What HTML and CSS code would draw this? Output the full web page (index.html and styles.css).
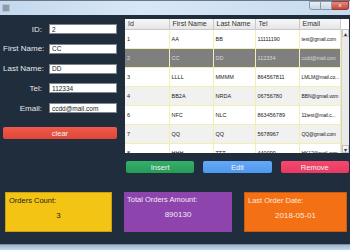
FILE: index.html
```html
<!DOCTYPE html>
<html lang="en">
<head>
  <meta charset="UTF-8">
  <title>Orders</title>
  <link rel="stylesheet" href="styles.css">
</head>
<body>
  <div class="window">
    <div class="titlebar">
      <span class="app-icon"></span>
      <div class="controls">
        <span class="ctl ctl-min"></span>
        <span class="ctl ctl-max"></span>
        <span class="ctl ctl-close">x</span>
      </div>
    </div>
    <div class="content">
      <div class="top">
        <div class="form">
          <label>ID:</label><input type="text" value="2">
          <label>First Name:</label><input type="text" value="CC">
          <label>Last Name:</label><input type="text" value="DD">
          <label>Tel:</label><input type="text" value="112334">
          <label>Email:</label><input type="text" value="ccdd@mail.com">
          <button class="btn clear">clear</button>
        </div>
        <div class="right">
          <div class="table-box">
            <table>
              <thead>
                <tr><th>Id</th><th>First Name</th><th>Last Name</th><th>Tel</th><th>Email</th></tr>
              </thead>
              <tbody>
                <tr><td>1</td><td>AA</td><td>BB</td><td>11111190</td><td>test@gmail.com</td></tr>
                <tr class="sel"><td>2</td><td>CC</td><td>DD</td><td>112334</td><td>ccdd@mail.com</td></tr>
                <tr><td>3</td><td>LLLL</td><td>MMMM</td><td>864567811</td><td>LMLM@mail.co...</td></tr>
                <tr class="alt"><td>4</td><td>BB2A</td><td>NRDA</td><td>06756780</td><td>BBN@gmail.vom</td></tr>
                <tr><td>6</td><td>NFC</td><td>NLC</td><td>863456789</td><td>11test@mail.c...</td></tr>
                <tr class="alt"><td>7</td><td>QQ</td><td>QQ</td><td>5678967</td><td>QQ@gmail.com</td></tr>
                <tr><td>8</td><td>HHH</td><td>TTT</td><td>440099</td><td>HK12@mail.com</td></tr>
              </tbody>
            </table>
            <div class="scrollbar">
              <span class="arrow">&#9652;</span>
              <span class="track"></span>
              <span class="arrow">&#9662;</span>
            </div>
          </div>
          <div class="actions">
            <button class="btn insert">Insert</button>
            <button class="btn edit">Edit</button>
            <button class="btn remove">Remove</button>
          </div>
        </div>
      </div>
      <div class="cards">
        <div class="card yellow">
          <div class="card-title">Orders Count:</div>
          <div class="card-value">3</div>
        </div>
        <div class="card purple">
          <div class="card-title">Total Orders Amount:</div>
          <div class="card-value">890130</div>
        </div>
        <div class="card orange">
          <div class="card-title">Last Order Date:</div>
          <div class="card-value">2018-05-01</div>
        </div>
      </div>
    </div>
    <div class="frame-bottom"></div>
  </div>
</body>
</html>
```

FILE: styles.css
```css
body {
  margin: 0;
  font-family: "Liberation Sans", Arial, sans-serif;
  background: #202d3c;
}

.window {
  width: 350px;
  height: 250px;
  display: flex;
  flex-direction: column;
  overflow: hidden;
}

.titlebar {
  height: 15px;
  flex: none;
  display: flex;
  justify-content: space-between;
  background: linear-gradient(90deg, #c3d8ee, #d8e7f7 40%, #c6dbf0);
  border-top: 1px solid #6d7683;
  box-sizing: border-box;
}

.app-icon {
  width: 6px;
  height: 6px;
  margin: 3px 0 0 2px;
  background: #8d9aa8;
  border: 1px solid #b8c2cc;
}

.controls {
  display: flex;
  align-items: flex-start;
  padding-right: 1px;
}

.ctl {
  height: 9px;
  box-sizing: border-box;
  border: 1px solid #8a98a8;
  background: linear-gradient(#e8eff7, #c9d6e4);
}

.ctl-min {
  width: 12px;
  border-radius: 0 0 0 3px;
}

.ctl-max {
  width: 11px;
  border-left: none;
}

.ctl-close {
  width: 17px;
  border: 1px solid #9b3a33;
  border-left: none;
  border-radius: 0 0 3px 0;
  background: linear-gradient(#e38b80, #c7463b);
  color: #fff;
  font-size: 6px;
  line-height: 7px;
  text-align: center;
}

.content {
  flex: 1;
  display: flex;
  flex-direction: column;
  background: #202d3c;
  padding: 4px 0 0 3px;
}

.top {
  display: flex;
  gap: 8px;
}

.form {
  width: 114px;
  display: grid;
  grid-template-columns: 39px 68px;
  grid-template-rows: repeat(5, 10px) 12px;
  column-gap: 7px;
  row-gap: 9.75px;
  align-items: center;
  align-content: start;
  padding-top: 5px;
}

.form label {
  text-align: right;
  white-space: nowrap;
  color: #e6e9ec;
  font-size: 8px;
}

.form input {
  width: 68px;
  height: 10px;
  box-sizing: border-box;
  border: 1px solid #7c8792;
  background: #fff;
  padding: 0 2px;
  font-family: inherit;
  font-size: 6.5px;
  color: #222;
}

.btn {
  border: none;
  border-radius: 2px;
  color: #f3f3f3;
  font-family: inherit;
  font-size: 7.5px;
  padding: 0;
  height: 12px;
}

.form .clear {
  grid-column: 1 / 3;
  margin-top: 9px;
  background: linear-gradient(#ee5a4b, #df4637);
}

.right {
  width: 224px;
  display: flex;
  flex-direction: column;
}

.table-box {
  height: 134px;
  display: flex;
  background: #fff;
  overflow: hidden;
}

table {
  width: 217px;
  border-collapse: collapse;
  table-layout: fixed;
  font-size: 5.5px;
  color: #222;
}

th {
  box-sizing: border-box;
  height: 10px;
  padding: 0 0 0 3px;
  text-align: left;
  font-weight: normal;
  font-size: 7px;
  color: #333;
  white-space: nowrap;
  overflow: hidden;
  background: linear-gradient(#f7f7f7, #e6e6e6);
  border-right: 1px solid #c9c9c9;
  border-bottom: 1px solid #c9c9c9;
}

th:nth-child(1) { width: 44px; }
th:nth-child(2) { width: 44px; }
th:nth-child(3) { width: 42px; }
th:nth-child(4) { width: 44px; }

td {
  height: 18px;
  padding: 0 0 0 2px;
  border-right: 1px solid #f3efb3;
  border-bottom: 1px solid #f3efb3;
  white-space: nowrap;
  overflow: hidden;
}

td:last-child {
  font-size: 5px;
  letter-spacing: -0.1px;
}

tr.alt td {
  background: #f1f1f1;
}

tr.sel td {
  background: #7f7f7f;
  color: #d8d8d8;
}

.scrollbar {
  width: 7px;
  display: flex;
  flex-direction: column;
  background: #eaeaea;
  border-left: 1px solid #d2d2d2;
  margin-top: 10px;
}

.arrow {
  height: 8px;
  font-size: 6px;
  line-height: 8px;
  text-align: center;
  color: #333;
  background: #f4f4f4;
  border: 1px solid #c3c3c3;
  box-sizing: border-box;
}

.track {
  flex: 1;
}

.actions {
  display: flex;
  gap: 9px;
  margin-top: 8px;
  padding-left: 1px;
}

.actions .btn {
  flex: 1;
}

.insert {
  background: linear-gradient(#33b06a, #279a58);
}

.edit {
  background: linear-gradient(#64aaf7, #4f98ec);
}

.remove {
  background: linear-gradient(#f4486f, #e83a61);
}

.cards {
  display: flex;
  gap: 12px;
  margin-top: 19px;
  padding-left: 2px;
}

.card {
  height: 40px;
  box-sizing: border-box;
  padding: 3px 3px 0;
  font-size: 7.5px;
}

.card-title {
  height: 15px;
}

.card-value {
  text-align: center;
  font-size: 8px;
}

.yellow {
  width: 107px;
  background: #f3c413;
  border: 1px solid #c9a012;
  color: #1d1d1d;
}

.purple {
  width: 108px;
  background: #8e44ad;
  color: #f0e8f4;
}

.orange {
  width: 103px;
  background: #f47015;
  border: 1px solid #c95a10;
  color: #fbe9dc;
}

.frame-bottom {
  height: 5px;
  flex: none;
  background: linear-gradient(#9fb6cd, #c6d9ee);
  border-top: 1px solid #7d8c9c;
}
```
